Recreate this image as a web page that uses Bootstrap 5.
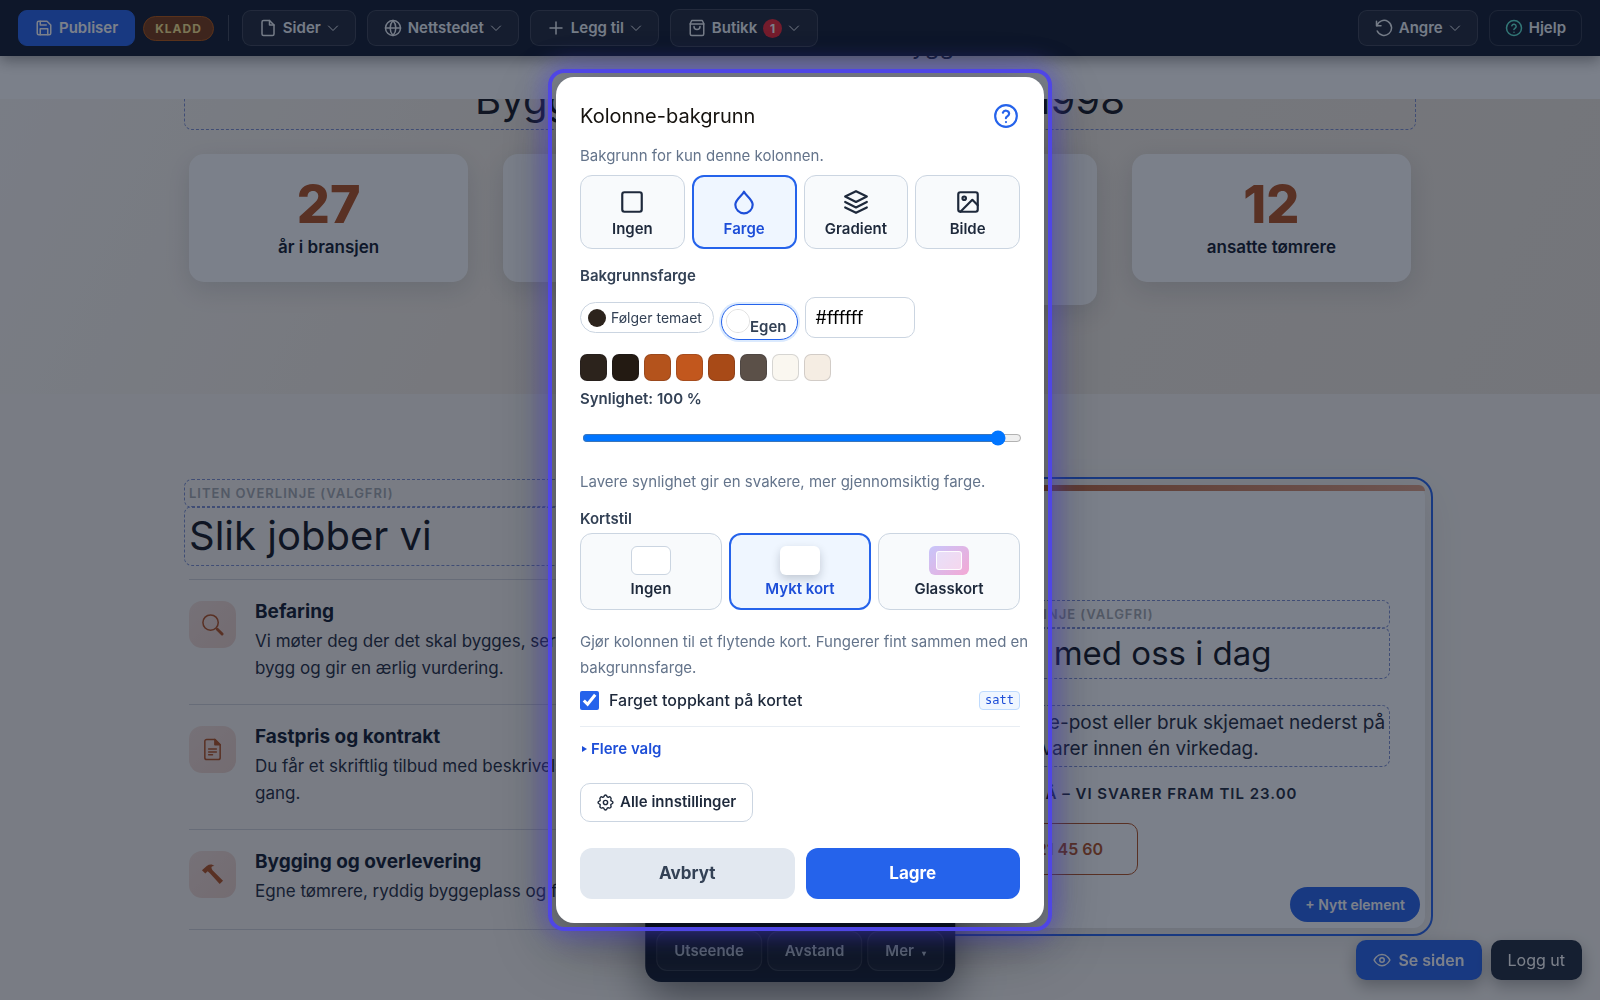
<!DOCTYPE html>
<html lang="nb">
<head>
<meta charset="utf-8">
<meta name="viewport" content="width=device-width, initial-scale=1">
<title>Kolonne-bakgrunn</title>
<link href="https://cdn.jsdelivr.net/npm/bootstrap@5.3.0/dist/css/bootstrap.min.css" rel="stylesheet">
<style>
:root { --blue: #2563eb; --ink: #1e293b; --rust: #b4501e; --line: #cbd5e1; }
body { font-family: Inter, "Liberation Sans", sans-serif; color: var(--ink); background: #faf7f2; min-height: 100vh; }
svg.ico { width: 18px; height: 18px; flex: none; fill: none; stroke: currentColor; stroke-width: 2; stroke-linecap: round; stroke-linejoin: round; }
svg.chev { width: 12px; height: 12px; }

/* Editor bar */
.editor-bar { height: 56px; padding: 0 18px; background: #0f172a; box-shadow: 0 4px 14px rgba(0,0,0,.4); z-index: 20; position: relative; }
.bar-group { gap: 11px; }
.bar-btn { height: 36px; padding: 0 16px; border-radius: 9px; font-size: 15px; font-weight: 600; line-height: 20px; color: #f1f5f9; background: rgba(255,255,255,.06); border: 1px solid rgba(255,255,255,.14); display: inline-flex; align-items: center; gap: 6px; white-space: nowrap; }
.bar-btn.solid { background: var(--blue); border-color: var(--blue); color: #fff; }
.bar-btn.clear { background: transparent; padding: 0 15px; }
.bar-btn.tall { height: 38px; padding: 0 17px; }
.ico.mint { color: #5eead4; }
.draft { height: 25px; padding: 0 11px; border-radius: 13px; border: 1px solid #b45309; background: #78350f; color: #fde68a; font-size: 12px; font-weight: 700; line-height: 23px; letter-spacing: 1px; }
.bar-rule { width: 1px; height: 26px; background: rgba(255,255,255,.2); margin: 0 13px 0 14px; }
.count { width: 19px; height: 19px; border-radius: 50%; background: #ef2330; color: #fff; font-size: 12px; font-weight: 700; line-height: 19px; text-align: center; }

/* Site */
.wrap { max-width: 1222px; margin: 0 auto; }
.site-head { height: 43px; background: #fff; position: relative; z-index: 10; }
.site-head a { position: absolute; left: 56%; top: -22px; font-size: 24px; line-height: 24px; color: var(--ink); text-decoration: none; }
.facts { height: 295px; overflow: hidden; background: linear-gradient(115deg, #fbf8f4 0%, #f6eee3 32%, #efe7dc 100%); }
.editable { outline: 1px dashed #7d8fd0; outline-offset: 4px; border-radius: 3px; }
.facts h2 { font-size: 40px; font-weight: 400; line-height: 50px; margin: -24px 0 29px; text-align: center; color: #14161c; }
.stats { gap: 35px; }
.stat { flex: 1 1 0; min-height: 128px; border-radius: 15px; background: #fff; padding: 23px 20px 23px; text-align: center; box-shadow: 0 8px 26px rgba(30,41,59,.14); }
.stat b { display: block; font-size: 52px; line-height: 56px; font-weight: 800; color: var(--rust); }
.stat span { display: block; font-size: 17px; font-weight: 600; line-height: 23px; margin-top: 3px; color: #0f172a; }

.work { gap: 48px; padding-top: 90px; }
.steps { flex: 1 1 0; }
.over { font-size: 13px; font-weight: 600; line-height: 19px; letter-spacing: 1px; text-transform: uppercase; color: #a5a8ae; margin: 0 0 8px; }
.steps h2 { font-size: 40px; font-weight: 400; line-height: 50px; margin: 0; color: #10131c; }
.step { border-top: 1px solid #d3d3d8; padding: 21px 0 17px; gap: 19px; }
.step:last-child { border-bottom: 1px solid #d3d3d8; padding-bottom: 19px; }
.step-list { margin-top: 18px; }
.step-ico { width: 47px; height: 47px; flex: none; border-radius: 13px; background: linear-gradient(135deg, #f3ded6, #eed2c8); color: var(--rust); }
.step-ico svg { width: 23px; height: 23px; stroke-width: 1.6; }
.step h3 { font-size: 19px; font-weight: 700; line-height: 25px; margin: -2px 0 4px; color: #0f172a; }
.step p { font-size: 17px; line-height: 27px; margin: 0 0 5px; }

.contact { flex: none; width: 517px; min-height: 443px; margin: 1px -14px 0 0; background: #fff; border-radius: 12px; padding: 120px 40px 0 41px; position: relative; outline: 2px solid var(--blue); outline-offset: 6px; box-shadow: 0 10px 40px rgba(30,41,59,.12); }
.contact::before { content: ""; position: absolute; inset: 0 0 auto 0; height: 6px; border-radius: 12px 12px 0 0; background: linear-gradient(90deg, #b4501e, #e0a083); }
.contact h2 { font-size: 33px; font-weight: 400; line-height: 42px; margin: 0 0 36px; color: #10131c; }
.contact p.body { font-size: 19px; line-height: 26px; margin: 0 0 22px; white-space: nowrap; }
.contact p.hours { font-size: 15px; font-weight: 600; line-height: 20px; letter-spacing: 1px; text-transform: uppercase; margin: 0 0 19px; }
.phone { display: inline-block; font-size: 16px; font-weight: 600; line-height: 24px; padding: 13px 34px; border: 1px solid var(--rust); border-radius: 10px; color: var(--rust); text-decoration: none; white-space: nowrap; }
.add-el { position: absolute; right: 5px; bottom: 6px; height: 35px; padding: 0 15px; border: 0; border-radius: 18px; background: var(--blue); color: #fff; font-size: 14px; font-weight: 600; }

/* Floating controls */
.dock { position: fixed; left: 50%; bottom: 18px; transform: translateX(-50%); background: #0f172a; border-radius: 16px; padding: 60px 11px 11px; gap: 5px; box-shadow: 0 16px 44px rgba(0,0,0,.5); }
.dock button { height: 40px; padding: 0 17px; border-radius: 11px; font-size: 15px; font-weight: 600; color: #cbd5e1; background: rgba(255,255,255,.04); border: 1px solid rgba(255,255,255,.12); white-space: nowrap; }
.dock small { font-size: 8px; margin-left: 4px; }
.corner { position: fixed; right: 18px; bottom: 20px; gap: 9px; }
.corner a { height: 40px; border-radius: 10px; padding: 0 17px; font-size: 16px; color: #fff; text-decoration: none; display: inline-flex; align-items: center; gap: 7px; background: var(--ink); box-shadow: 0 6px 16px rgba(0,0,0,.3); }
.corner a.go { background: var(--blue); font-weight: 600; }

/* Dialog */
.modal { background: rgba(15,23,42,.55); }
.modal-dialog { max-width: 488px; }
.modal-content { border: 0; border-radius: 18px; padding: 24px; box-shadow: 0 20px 60px rgba(0,0,0,.4); color: var(--ink); }
.modal-content::after { content: ""; position: absolute; inset: -8px; border: 4px solid #4f46e5; border-radius: 16px; box-shadow: 0 0 26px 2px rgba(79,70,229,.6); pointer-events: none; }
.dlg-title { font-size: 20px; font-weight: 400; line-height: 30px; color: #15120e; }
.help { border: 0; background: none; padding: 0; margin-right: 1px; color: var(--blue); line-height: 0; }
.help svg { width: 26px; height: 26px; }
.hint { font-size: 15px; line-height: 26px; color: #64748b; margin: 0 -10px 0 0; }
.intro { margin-bottom: 6px; }
.after-tiles { margin-top: 19px; }
.lbl { font-size: 15px; font-weight: 600; line-height: 22px; color: #334155; display: block; }
.lbl.vis { margin-top: 7px; }
.lbl.style { margin: 13px 0 3px; }
.tiles { display: grid; grid-template-columns: repeat(4, 1fr); gap: 7px; }
.tiles.styles { grid-template-columns: repeat(3, 1fr); }
.tile { height: 74px; min-width: 0; padding: 4px 0 0; border: 1px solid var(--line); border-radius: 12px; background: #f8fafc; color: var(--ink); font-size: 15px; font-weight: 600; line-height: 22px; display: flex; flex-direction: column; align-items: center; justify-content: center; gap: 3px; }
.tile svg { width: 26px; height: 26px; }
.tile.on { border: 2px solid var(--blue); background: #eff6ff; color: #1d4ed8; }
.tiles.styles .tile { height: 77px; padding-top: 3px; }
.thumb { width: 40px; height: 29px; border-radius: 6px; background: #fff; border: 1px solid var(--line); }
.thumb.soft { border: 0; box-shadow: 0 4px 10px rgba(15,23,42,.2); }
.thumb.glass { border: 0; background: linear-gradient(135deg, #c7c6fb, #f4a8d4); padding: 5px 7px; }
.thumb.glass i { display: block; height: 19px; border-radius: 3px; border: 1px solid rgba(255,255,255,.9); background: rgba(255,255,255,.5); }
.pick { gap: 7px; margin-top: 10px; }
.follow { height: 31px; padding: 0 11px 0 7px; border: 1px solid var(--line); border-radius: 16px; background: #fff; font-size: 14px; color: #334155; display: inline-flex; align-items: center; gap: 5px; }
.follow i { width: 18px; height: 18px; border-radius: 50%; background: #2c231c; }
.own { height: 36px; padding: 4px 11px 0 4px; margin-bottom: -2px; border: 1px solid var(--blue); border-radius: 18px; background: #fff; box-shadow: 0 0 0 2px #dbeafe; align-self: flex-end; display: inline-flex; align-items: flex-start; font-size: 15px; font-weight: 600; color: #334155; }
.own input { appearance: none; width: 24px; height: 24px; padding: 0; border: 1px solid #ddd; border-radius: 50%; background: #fff; overflow: hidden; }
.own input::-webkit-color-swatch-wrapper { padding: 0; }
.own input::-webkit-color-swatch { border: 0; }
.own label { line-height: 20px; padding-top: 8px; }
.hex { width: 110px; height: 41px; border: 1px solid var(--line); border-radius: 10px; padding: 0 9px; font-size: 18px; color: #000; }
.swatches { gap: 5px; margin-top: 16px; }
.swatches button { width: 27px; height: 27px; padding: 0; border-radius: 7px; border: 1px solid rgba(15,23,42,.15); }
.slide { display: block; width: 440px; max-width: 100%; height: 16px; margin: 20px 0 23px 2px; }
.check { gap: 10px; margin-top: 7px; height: 24px; }
.check input { width: 19px; height: 19px; margin: 0; accent-color: var(--blue); }
.check label { font-size: 16px; font-weight: 500; line-height: 24px; }
.tag { height: 19px; padding: 0 5px; border: 1px solid #bfdbfe; border-radius: 4px; background: #eff6ff; color: #1d4ed8; font: 12px/17px "DejaVu Sans Mono", monospace; }
.split { border-top: 1px solid #e8edf3; margin-top: 14px; }
.more { align-self: flex-start; margin: 11px 0 23px; font-size: 15px; font-weight: 600; line-height: 22px; color: #1d4ed8; text-decoration: none; display: flex; align-items: center; gap: 4px; }
.more i { border: 3px solid transparent; border-left: 5px solid currentColor; border-right: 0; margin-left: 2px; }
.all { height: 39px; padding: 0 16px; border: 1px solid var(--line); border-radius: 10px; background: #fff; color: var(--ink); font-size: 15px; font-weight: 600; gap: 6px; }
.all svg { width: 17px; height: 17px; }
.acts { gap: 11px; margin-top: 26px; }
.act { flex: 1 1 0; height: 51px; border: 0; border-radius: 12px; font-size: 17px; font-weight: 700; }
.act.no { background: #e2e8f0; color: #334155; }
.act.yes { background: var(--blue); color: #fff; }
</style>
<script src="https://cdn.jsdelivr.net/npm/bootstrap@5.3.0/dist/js/bootstrap.bundle.min.js"></script>
</head>
<body>
<svg class="d-none" aria-hidden="true">
  <symbol id="i-save" viewBox="0 0 24 24"><path d="M5 3h11l5 5v11a2 2 0 0 1-2 2H5a2 2 0 0 1-2-2V5a2 2 0 0 1 2-2z"/><path d="M7 3v5h8M7 21v-8h10v8"/></symbol>
  <symbol id="i-file" viewBox="0 0 24 24"><path d="M14 2H6a2 2 0 0 0-2 2v16a2 2 0 0 0 2 2h12a2 2 0 0 0 2-2V8z"/><path d="M14 2v6h6"/></symbol>
  <symbol id="i-globe" viewBox="0 0 24 24"><circle cx="12" cy="12" r="10"/><path d="M2 12h20M12 2a15 15 0 0 1 0 20M12 2a15 15 0 0 0 0 20"/></symbol>
  <symbol id="i-plus" viewBox="0 0 24 24"><path d="M12 4v16M4 12h16"/></symbol>
  <symbol id="i-bag" viewBox="0 0 24 24"><path d="M5 2h14l2 4v14a2 2 0 0 1-2 2H5a2 2 0 0 1-2-2V6z"/><path d="M3 6.500h18M16 10a4 4 0 0 1-8 0"/></symbol>
  <symbol id="i-chev" viewBox="0 0 24 24"><path d="M3 8l9 9 9-9"/></symbol>
  <symbol id="i-undo" viewBox="0 0 24 24"><path d="M2 3v6h6"/><path d="M2.500 9A10 10 0 1 1 3 16"/></symbol>
  <symbol id="i-help" viewBox="0 0 24 24"><circle cx="12" cy="12" r="10"/><path d="M9.100 9a3 3 0 0 1 5.800 1c0 2-3 2.600-3 4M12 17.500v.1"/></symbol>
  <symbol id="i-square" viewBox="0 0 24 24"><rect x="3" y="3" width="18" height="18" rx="2"/></symbol>
  <symbol id="i-drop" viewBox="0 0 24 24"><path d="M12 2.500c1.500 3.500 8 7 8 12a8 8 0 0 1-16 0c0-5 6.500-8.500 8-12z"/></symbol>
  <symbol id="i-layers" viewBox="0 0 24 24"><path d="M12 2L2 7l10 5 10-5zM2 12l10 5 10-5M2 17l10 5 10-5"/></symbol>
  <symbol id="i-image" viewBox="0 0 24 24"><rect x="3" y="3" width="18" height="18" rx="2"/><circle cx="8.500" cy="8.500" r="1.600"/><path d="M21 15l-5-5L5 21"/></symbol>
  <symbol id="i-eye" viewBox="0 0 24 24"><path d="M1.500 12S5 4.500 12 4.500 22.500 12 22.500 12 19 19.500 12 19.500 1.500 12 1.500 12z"/><circle cx="12" cy="12" r="3"/></symbol>
  <symbol id="i-gear" viewBox="0 0 24 24"><path d="M12 1.500c1.200 0 1.700.7 2 1.700.3 1.200 1.500 1.700 2.600 1.100 1-.6 1.800-.4 2.600.5.800.8 1 1.600.5 2.600-.6 1.100-.1 2.300 1.100 2.600 1 .3 1.700.8 1.700 2s-.7 1.700-1.700 2c-1.200.3-1.700 1.500-1.100 2.600.5 1 .3 1.800-.5 2.600-.8.800-1.600 1-2.600.5-1.100-.6-2.300-.1-2.600 1.100-.3 1-.8 1.700-2 1.700s-1.700-.7-2-1.700c-.3-1.200-1.500-1.700-2.600-1.100-1 .5-1.800.3-2.600-.5-.8-.8-1-1.600-.5-2.600.6-1.100.1-2.300-1.100-2.600-1-.3-1.700-.8-1.700-2s.7-1.700 1.700-2c1.200-.3 1.700-1.500 1.100-2.600-.5-1-.3-1.800.5-2.600.8-.9 1.600-1.100 2.600-.5 1.100.6 2.300.1 2.600-1.100.3-1 .8-1.700 2-1.700z"/><circle cx="12" cy="12" r="3"/></symbol>
  <symbol id="i-search" viewBox="0 0 24 24"><circle cx="10" cy="10" r="8"/><path stroke-width="3" d="M17 17l5 5"/></symbol>
  <symbol id="i-doc" viewBox="0 0 24 24"><path d="M14.500 1.500H6a2 2 0 0 0-2 2v17a2 2 0 0 0 2 2h12a2 2 0 0 0 2-2V7z"/><path fill="currentColor" d="M14.500 1.500V7H20z"/><path d="M8 11.500h8M8 14.500h8M8 17.500h4"/></symbol>
  <symbol id="i-hammer" viewBox="0 0 24 24"><path fill="currentColor" stroke="none" d="M1 7.500L6 3c3-2 6-2 8 .2-2-.2-3.500.5-3 2.300l1 2L23 18.500 19.500 22 9 10.500 7 8.500 4.500 11z"/></symbol>
</svg>

<nav class="editor-bar d-flex align-items-center" aria-label="Redigering">
  <button class="bar-btn solid"><svg class="ico"><use href="#i-save"/></svg>Publiser</button>
  <span class="draft ms-2">KLADD</span>
  <span class="bar-rule"></span>
  <div class="bar-group d-flex align-items-center">
    <button class="bar-btn"><svg class="ico"><use href="#i-file"/></svg>Sider<svg class="ico chev"><use href="#i-chev"/></svg></button>
    <button class="bar-btn"><svg class="ico"><use href="#i-globe"/></svg>Nettstedet<svg class="ico chev"><use href="#i-chev"/></svg></button>
    <button class="bar-btn"><svg class="ico"><use href="#i-plus"/></svg>Legg til<svg class="ico chev"><use href="#i-chev"/></svg></button>
    <button class="bar-btn tall"><svg class="ico"><use href="#i-bag"/></svg>Butikk<span class="count">1</span><svg class="ico chev"><use href="#i-chev"/></svg></button>
  </div>
  <div class="bar-group d-flex align-items-center ms-auto">
    <button class="bar-btn"><svg class="ico"><use href="#i-undo"/></svg>Angre<svg class="ico chev"><use href="#i-chev"/></svg></button>
    <button class="bar-btn clear"><svg class="ico mint"><use href="#i-help"/></svg>Hjelp</button>
  </div>
</nav>

<header class="site-head"><a href="#">Bygg</a></header>

<main>
  <section class="facts">
    <div class="wrap">
      <h2 class="editable">Byggmester med røtter siden 1998</h2>
      <div class="stats d-flex align-items-start">
        <div class="stat"><b>27</b><span>år i bransjen</span></div>
        <div class="stat"><b>340</b><span>ferdige prosjekter</span></div>
        <div class="stat"><b>98</b><span>prosent fornøyde<br>kunder</span></div>
        <div class="stat"><b>12</b><span>ansatte tømrere</span></div>
      </div>
    </div>
  </section>

  <section class="wrap work d-flex align-items-start">
    <div class="steps">
      <p class="over editable">Liten overlinje (valgfri)</p>
      <h2 class="editable">Slik jobber vi</h2>
      <div class="step-list">
        <div class="step d-flex">
          <div class="step-ico d-flex align-items-center justify-content-center"><svg class="ico"><use href="#i-search"/></svg></div>
          <div><h3>Befaring</h3><p>Vi møter deg der det skal bygges, ser<br>bygg og gir en ærlig vurdering.</p></div>
        </div>
        <div class="step d-flex">
          <div class="step-ico d-flex align-items-center justify-content-center"><svg class="ico"><use href="#i-doc"/></svg></div>
          <div><h3>Fastpris og kontrakt</h3><p>Du får et skriftlig tilbud med beskrivelse<br>gang.</p></div>
        </div>
        <div class="step d-flex">
          <div class="step-ico d-flex align-items-center justify-content-center"><svg class="ico"><use href="#i-hammer"/></svg></div>
          <div><h3>Bygging og overlevering</h3><p>Egne tømrere, ryddig byggeplass og fast</p></div>
        </div>
      </div>
    </div>
    <aside class="contact">
      <p class="over editable">Liten overlinje (valgfri)</p>
      <h2 class="editable">Snakk med oss i dag</h2>
      <p class="body editable">Ring, send e-post eller bruk skjemaet nederst på<br>siden. Vi svarer innen én virkedag.</p>
      <p class="hours">Ring oss nå – vi svarer fram til 23.00</p>
      <a class="phone" href="#">Tlf. 22 21 45 60</a>
      <button class="add-el">+ Nytt element</button>
    </aside>
  </section>
</main>

<div class="dock d-flex"><button>Utseende</button><button>Avstand</button><button>Mer <small>▾</small></button></div>
<div class="corner d-flex">
  <a class="go" href="#"><svg class="ico"><use href="#i-eye"/></svg>Se siden</a>
  <a href="#">Logg ut</a>
</div>

<div class="modal d-block" role="dialog" aria-modal="true" aria-labelledby="dlgTitle">
  <div class="modal-dialog modal-dialog-centered my-0 min-vh-100">
    <form class="modal-content" onsubmit="return false">
      <div class="d-flex align-items-center justify-content-between mb-2 pb-1">
        <h1 class="dlg-title m-0" id="dlgTitle">Kolonne-bakgrunn</h1>
        <button type="button" class="help" aria-label="Hjelp"><svg class="ico"><use href="#i-help"/></svg></button>
      </div>
      <p class="hint intro">Bakgrunn for kun denne kolonnen.</p>
      <div class="tiles">
        <button type="button" class="tile"><svg class="ico"><use href="#i-square"/></svg>Ingen</button>
        <button type="button" class="tile on"><svg class="ico"><use href="#i-drop"/></svg>Farge</button>
        <button type="button" class="tile"><svg class="ico"><use href="#i-layers"/></svg>Gradient</button>
        <button type="button" class="tile"><svg class="ico"><use href="#i-image"/></svg>Bilde</button>
      </div>
      <label class="lbl mt-3" for="hex">Bakgrunnsfarge</label>
      <div class="pick d-flex align-items-center">
        <button type="button" class="follow"><i></i>Følger temaet</button>
        <span class="own"><input type="color" id="own" value="#ffffff"><label for="own">Egen</label></span>
        <input class="hex" id="hex" type="text" value="#ffffff">
      </div>
      <div class="swatches d-flex">
        <button type="button" aria-label="#2c231c" style="background:#2c231c"></button>
        <button type="button" aria-label="#231a12" style="background:#231a12"></button>
        <button type="button" aria-label="#b4531c" style="background:#b4531c"></button>
        <button type="button" aria-label="#c2571d" style="background:#c2571d"></button>
        <button type="button" aria-label="#a84a17" style="background:#a84a17"></button>
        <button type="button" aria-label="#5b5048" style="background:#5b5048"></button>
        <button type="button" aria-label="#faf7f0" style="background:#faf7f0"></button>
        <button type="button" aria-label="#f5ede3" style="background:#f5ede3"></button>
      </div>
      <label class="lbl vis" for="alpha">Synlighet: 100 %</label>
      <input class="slide" id="alpha" type="range" min="0" max="104" value="100">
      <p class="hint">Lavere synlighet gir en svakere, mer gjennomsiktig farge.</p>
      <span class="lbl style">Kortstil</span>
      <div class="tiles styles">
        <button type="button" class="tile"><span class="thumb"></span>Ingen</button>
        <button type="button" class="tile on"><span class="thumb soft"></span>Mykt kort</button>
        <button type="button" class="tile"><span class="thumb glass"><i></i></span>Glasskort</button>
      </div>
      <p class="hint after-tiles">Gjør kolonnen til et flytende kort. Fungerer fint sammen med en bakgrunnsfarge.</p>
      <div class="check d-flex align-items-center">
        <input type="checkbox" id="edge" checked><label for="edge">Farget toppkant på kortet</label>
        <span class="tag ms-auto">satt</span>
      </div>
      <div class="split"></div>
      <a class="more" href="#"><i></i>Flere valg</a>
      <button type="button" class="all d-inline-flex align-items-center align-self-start"><svg class="ico"><use href="#i-gear"/></svg>Alle innstillinger</button>
      <div class="acts d-flex">
        <button type="button" class="act no">Avbryt</button>
        <button type="submit" class="act yes">Lagre</button>
      </div>
    </form>
  </div>
</div>
</body>
</html>
